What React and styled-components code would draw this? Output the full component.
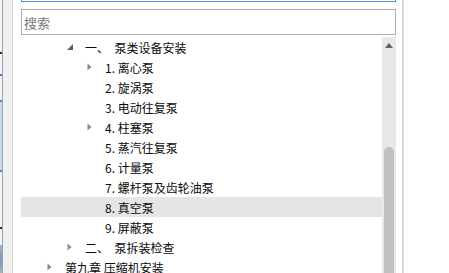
import React from 'react';
import styled, { createGlobalStyle } from 'styled-components';

const GlobalStyle = createGlobalStyle`
  html, body {
    margin: 0;
    padding: 0;
    background: #ffffff;
    overflow: hidden;
  }
  body {
    font-family: "Noto Sans CJK SC", "Microsoft YaHei", sans-serif;
  }
`;

const Page = styled.div`
  display: flex;
  width: 449px;
  height: 273px;
  overflow: hidden;
  background: #ffffff;
`;

const EdgeStrip = styled.div`
  width: 2px;
  flex-shrink: 0;
  background: linear-gradient(
    to bottom,
    #f4f6f9 0px,
    #f4f6f9 52px,
    #2a2a2a 52px,
    #2a2a2a 54px,
    #f4f6f9 54px,
    #f4f6f9 74px,
    #a050c0 74px,
    #a050c0 76px,
    #f4f6f9 76px,
    #f4f6f9 100px,
    #7a7a7a 100px,
    #7a7a7a 102px,
    #c3daf5 102px,
    #c3daf5 170px,
    #7a7a7a 170px,
    #7a7a7a 172px,
    #f4f6f9 172px,
    #f4f6f9 227px,
    #2a2a2a 227px,
    #2a2a2a 229px,
    #f4f6f9 229px,
    #f4f6f9 245px,
    #b0b0b0 245px,
    #6a9ad0 260px,
    #b0b0b0 273px
  );
`;

const EdgeLine = styled.div`
  width: 1px;
  flex-shrink: 0;
  background: #9aa4b0;
`;

const Gutter = styled.div`
  width: 9px;
  flex-shrink: 0;
  background: #f0f0f0;
  border-right: 1px solid #d4d4d4;
`;

const Main = styled.div`
  width: 375px;
  flex-shrink: 0;
  padding: 0 6px 0 8px;
  display: flex;
  flex-direction: column;
`;

const FocusBox = styled.div`
  height: 1px;
  border: 1px solid #4b93e2;
  border-top: none;
`;

const SearchBox = styled.div`
  margin-top: 7px;
  height: 24px;
  border: 1px solid #ababab;
  display: flex;
  align-items: center;
  padding-left: 2px;
  font-size: 13px;
  color: #7a7a7a;
`;

const TreeArea = styled.div`
  margin-top: 2px;
  flex: 1;
  display: flex;
  min-height: 0;
  overflow: hidden;
`;

const List = styled.div`
  flex: 1;
  display: flex;
  flex-direction: column;
`;

const Row = styled.div`
  height: 20px;
  flex-shrink: 0;
  display: flex;
  align-items: center;
  padding-left: ${({ $level }) => 26 + $level * 20}px;
  background: ${({ $selected }) => ($selected ? '#e5e5e5' : 'transparent')};
  font-size: 12px;
  color: #0a0a0a;
  white-space: pre;
`;

const ArrowCell = styled.span`
  width: 17px;
  flex-shrink: 0;
  display: flex;
  align-items: center;
`;

const Label = styled.span`
  line-height: 20px;
  padding-top: 1px;
  margin-left: 1px;
`;

const ScrollBar = styled.div`
  width: 14px;
  flex-shrink: 0;
  background: #e8e8e8;
  display: flex;
  flex-direction: column;
  align-items: center;
`;

const UpButton = styled.div`
  height: 16px;
  flex-shrink: 0;
  display: flex;
  align-items: center;
  justify-content: center;
`;

const Thumb = styled.div`
  margin-top: 94px;
  width: 10px;
  height: 140px;
  flex-shrink: 0;
  background: #c1c1c1;
  border-radius: 5px 5px 0 0;
`;

const RightLine = styled.div`
  width: 2px;
  flex-shrink: 0;
  background: #d9d9d9;
`;

const Collapsed = () => (
  <svg width="5" height="8" viewBox="0 0 5 8">
    <path d="M0.5 0.5 L4.5 4 L0.5 7.5 Z" fill="#8a8a8a" />
  </svg>
);

const Expanded = () => (
  <svg width="6" height="6" viewBox="0 0 6 6">
    <path d="M6 0 L6 6 L0 6 Z" fill="#5f5f5f" />
  </svg>
);

const rows = [
  { level: 1, arrow: 'open', text: '一、  泵类设备安装' },
  { level: 2, arrow: 'closed', text: '1. 离心泵' },
  { level: 2, text: '2. 旋涡泵' },
  { level: 2, text: '3. 电动往复泵' },
  { level: 2, arrow: 'closed', text: '4. 柱塞泵' },
  { level: 2, text: '5. 蒸汽往复泵' },
  { level: 2, text: '6. 计量泵' },
  { level: 2, text: '7. 螺杆泵及齿轮油泵' },
  { level: 2, text: '8. 真空泵', selected: true },
  { level: 2, text: '9. 屏蔽泵' },
  { level: 1, arrow: 'closed', text: '二、  泵拆装检查' },
  { level: 0, arrow: 'closed', text: '第九章 压缩机安装' },
];

const App = () => (
  <>
    <GlobalStyle />
    <Page>
      <EdgeStrip />
      <EdgeLine />
      <Gutter />
      <Main>
        <FocusBox />
        <SearchBox>搜索</SearchBox>
        <TreeArea>
          <List>
            {rows.map((row, i) => (
              <Row key={i} $level={row.level} $selected={row.selected}>
                <ArrowCell>
                  {row.arrow === 'open' && <Expanded />}
                  {row.arrow === 'closed' && <Collapsed />}
                </ArrowCell>
                <Label>{row.text}</Label>
              </Row>
            ))}
          </List>
          <ScrollBar>
            <UpButton>
              <svg width="8" height="5" viewBox="0 0 8 5">
                <path d="M4 0 L8 5 L0 5 Z" fill="#606060" />
              </svg>
            </UpButton>
            <Thumb />
          </ScrollBar>
        </TreeArea>
      </Main>
      <RightLine />
    </Page>
  </>
);

export default App;
